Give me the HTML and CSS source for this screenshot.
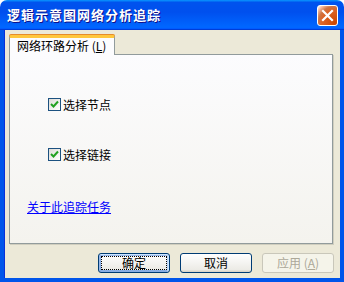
FILE: index.html
```html
<!DOCTYPE html>
<html lang="zh-CN">
<head>
<meta charset="utf-8">
<link rel="stylesheet" href="styles.css">
</head>
<body>
<div class="window">
  <div class="titlebar">
    <span class="title">逻辑示意图网络分析追踪</span>
    <span class="close"><svg width="13" height="13" viewBox="0 0 13 13"><path d="M2 2 L11 11 M11 2 L2 11" stroke="#fff" stroke-width="2.2" stroke-linecap="square"/></svg></span>
  </div>
  <div class="client">
    <div class="tabs">
      <div class="tab">网络环路分析 (<u>L</u>)</div>
    </div>
    <div class="panel">
      <label class="check"><span class="box"><svg width="11" height="11" viewBox="0 0 11 11"><path d="M2 5 L4.5 7.5 L9 2.5" fill="none" stroke="#21a121" stroke-width="2"/></svg></span><span>选择节点</span></label>
      <label class="check second"><span class="box"><svg width="11" height="11" viewBox="0 0 11 11"><path d="M2 5 L4.5 7.5 L9 2.5" fill="none" stroke="#21a121" stroke-width="2"/></svg></span><span>选择链接</span></label>
      <a class="link" href="#">关于此追踪任务</a>
    </div>
    <div class="buttons">
      <span class="btn default"><span class="focus">确定</span></span>
      <span class="btn">取消</span>
      <span class="btn disabled">应用 (<u>A</u>)</span>
    </div>
  </div>
</div>
</body>
</html>
```
FILE: styles.css
```css
* { box-sizing: border-box; }
html, body { margin: 0; padding: 0; background: #fff; }
body {
  font-family: "Noto Sans CJK SC", "Liberation Sans", sans-serif;
  font-size: 12px;
  color: #000;
}
.window {
  width: 344px;
  height: 282px;
  display: flex;
  flex-direction: column;
}
.titlebar {
  height: 30px;
  flex: none;
  display: flex;
  align-items: center;
  justify-content: space-between;
  padding: 0 6px 0 7px;
  border-radius: 7px 7px 0 0;
  background: linear-gradient(180deg, #0997ff, #0053ee 8%, #0050ee 40%, #06f 88%, #06f 93%, #005bff 95%, #003dd7 96%, #003dd7);
}
.title {
  color: #fff;
  font-weight: bold;
  font-size: 13px;
  letter-spacing: 1px;
  text-shadow: 1px 1px #0f1089;
  line-height: 16px;
}
.close {
  width: 21px;
  height: 21px;
  border: 1px solid #fff;
  border-radius: 3px;
  display: flex;
  align-items: center;
  justify-content: center;
  background: radial-gradient(circle at 90% 90%, #cc4600 0%, #dc6527 55%, #cd7546 70%, #ffccb2 90%, #fff 100%);
}
.client {
  flex: 1;
  background: #ece9d8;
  border-left: 4px solid #0055ea;
  border-right: 4px solid #0055ea;
  border-bottom: 4px solid #0055ea;
  box-shadow: inset 1px 0 #0831d9;
  padding: 5px 0 5px 5px;
  display: flex;
  flex-direction: column;
}
.tabs {
  height: 19px;
  display: flex;
}
.tab {
  position: relative;
  z-index: 1;
  width: 106px;
  height: 20px;
  background: #fcfcfe;
  border: 1px solid #919b9c;
  border-bottom: none;
  border-top: 3px solid #ffc73c;
  box-shadow: 0 -1px #e68b2c;
  border-radius: 2px 2px 0 0;
  padding-left: 7px;
  line-height: 15px;
  white-space: nowrap;
}
.panel {
  width: 324px;
  height: 190px;
  background: linear-gradient(180deg, #fcfcfe, #f4f3ee);
  border: 1px solid #919b9c;
  box-shadow: 1px 1px #d0cebf;
  padding: 43px 0 0 38px;
  display: flex;
  flex-direction: column;
  align-items: flex-start;
}
.check {
  display: flex;
  align-items: center;
  gap: 2px;
  height: 13px;
  line-height: 13px;
}
.check.second { margin-top: 37px; }
.box {
  width: 13px;
  height: 13px;
  border: 1px solid #1c5180;
  background: linear-gradient(135deg, #dcdcd7, #fff);
  display: flex;
  align-items: center;
  justify-content: center;
}
.link {
  margin: 39px 0 0 -21px;
  color: #0000ff;
  line-height: 14px;
  text-decoration: underline;
}
.buttons {
  margin-top: 9px;
  height: 20px;
  display: flex;
  justify-content: flex-end;
  gap: 10px;
  padding-right: 6px;
}
.btn {
  width: 72px;
  height: 20px;
  border: 1px solid #003c74;
  border-radius: 3px;
  background: linear-gradient(180deg, #fff, #ecebe6 86%, #d6d0c5);
  display: flex;
  align-items: center;
  justify-content: center;
  line-height: 14px;
}
.btn.default {
  box-shadow: inset -1px 1px #cee7ff, inset 1px 2px #98b8ea, inset -2px 2px #bcd4f6, inset 1px -1px #89ade4, inset 2px -2px #89ade4;
  padding: 2px;
}
.focus {
  width: 100%;
  height: 100%;
  border: 1px dotted #000;
  display: flex;
  align-items: center;
  justify-content: center;
}
.btn.disabled {
  border-color: #c9c7ba;
  background: #f5f4ea;
  color: #aca899;
}
```
